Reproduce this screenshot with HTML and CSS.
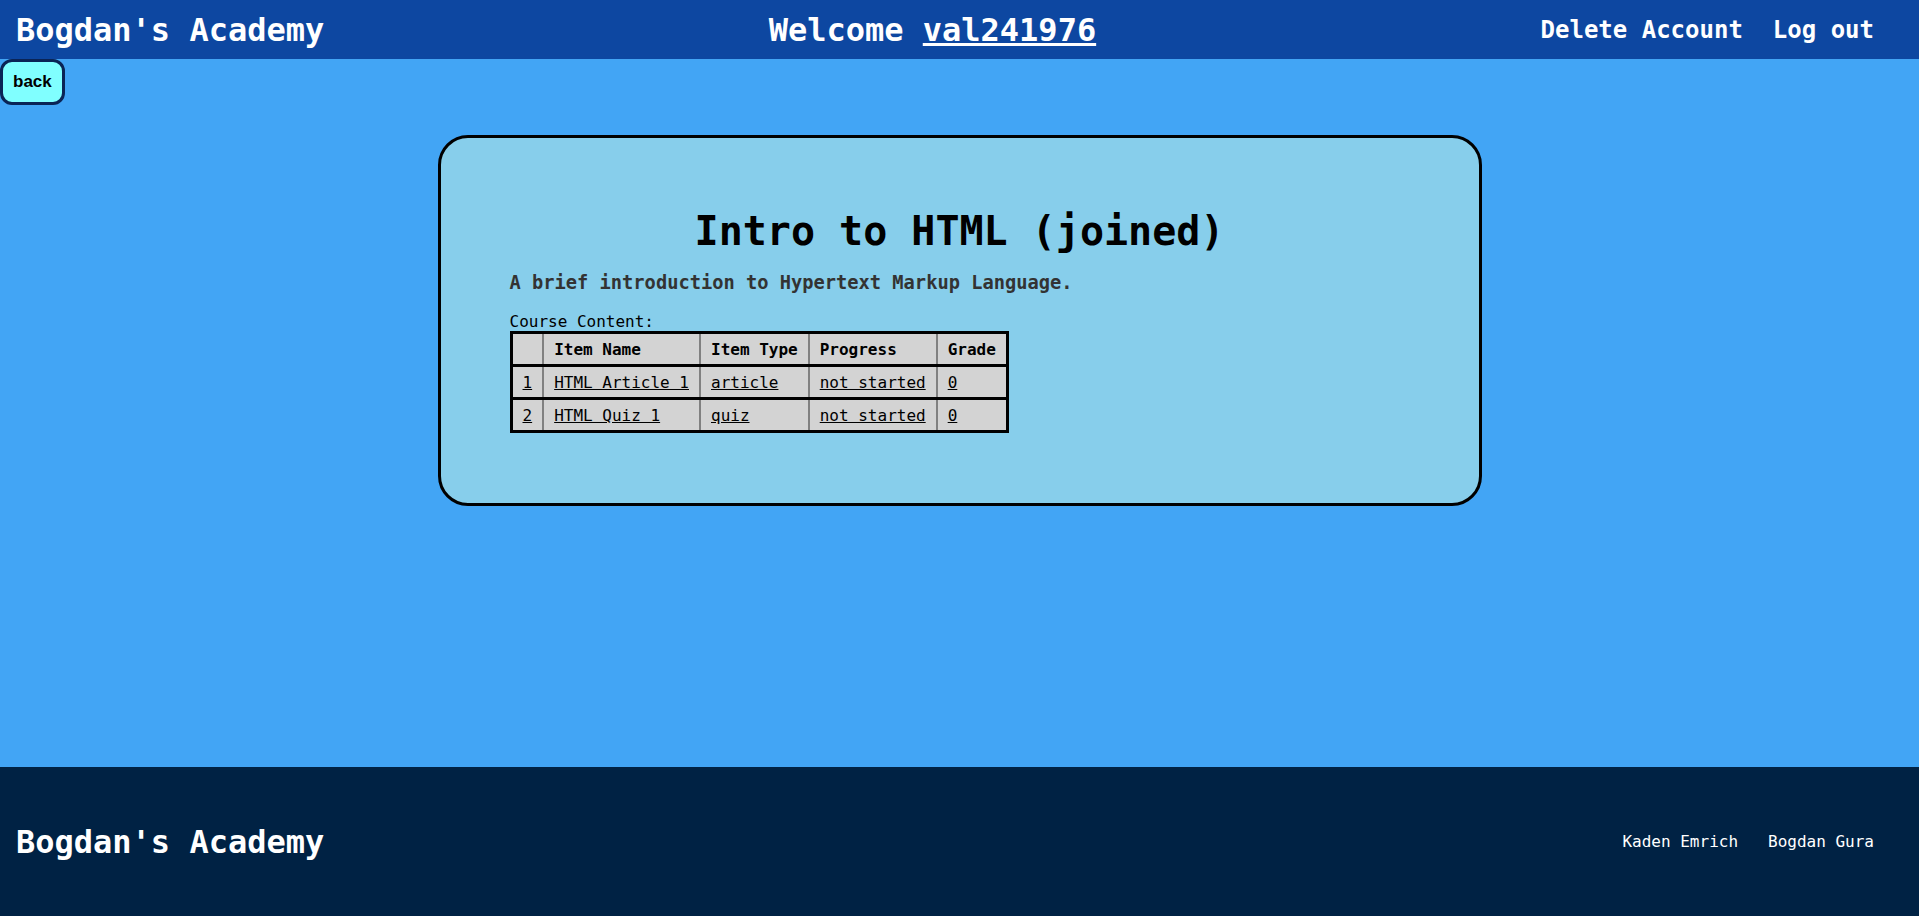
FILE: index.html
```html
<!DOCTYPE html>
<html lang="en">
<head>
<meta charset="utf-8">
<title>Intro to HTML - Bogdan's Academy</title>
<link rel="stylesheet" href="styles.css">
</head>
<body>
<header class="topbar">
  <div class="brand">Bogdan's Academy</div>
  <div class="welcome">Welcome <a href="#" class="user-link">val241976</a></div>
  <nav class="nav">
    <a href="#" class="nav-link">Delete Account</a>
    <a href="#" class="nav-link">Log out</a>
  </nav>
</header>
<main class="main">
  <div class="back-row"><button class="back-btn" type="button">back</button></div>
  <section class="card">
    <h1 class="course-title">Intro to HTML (joined)</h1>
    <h3 class="course-desc">A brief introduction to Hypertext Markup Language.</h3>
    <div class="content-label">Course Content:</div>
    <table class="content-table">
      <thead>
        <tr><th></th><th>Item Name</th><th>Item Type</th><th>Progress</th><th>Grade</th></tr>
      </thead>
      <tbody>
        <tr><td><a href="#">1</a></td><td><a href="#">HTML Article 1</a></td><td><a href="#">article</a></td><td><a href="#">not started</a></td><td><a href="#">0</a></td></tr>
        <tr><td><a href="#">2</a></td><td><a href="#">HTML Quiz 1</a></td><td><a href="#">quiz</a></td><td><a href="#">not started</a></td><td><a href="#">0</a></td></tr>
      </tbody>
    </table>
  </section>
</main>
<footer class="footer">
  <div class="brand">Bogdan's Academy</div>
  <div class="credits">
    <span class="credit">Kaden Emrich</span>
    <span class="credit">Bogdan Gura</span>
  </div>
</footer>
</body>
</html>
```
FILE: styles.css
```css
html, body {
  margin: 0;
  padding: 0;
}
body {
  font-family: "DejaVu Sans Mono", monospace;
  background: #42a5f5;
  min-height: 100vh;
  display: flex;
  flex-direction: column;
  color: #000;
}
.topbar {
  height: 59px;
  background: #0d47a1;
  color: #fff;
  display: flex;
  align-items: center;
  justify-content: space-between;
  padding: 0 45px 0 16px;
  box-sizing: border-box;
}
.brand {
  font-size: 32px;
  font-weight: bold;
  color: #fff;
}
.welcome {
  font-size: 32px;
  font-weight: bold;
}
.user-link {
  color: #fff;
  text-decoration: underline;
}
.nav {
  display: flex;
  gap: 30px;
}
.nav-link {
  color: #fff;
  text-decoration: none;
  font-size: 24px;
  font-weight: bold;
}
.main {
  flex: 1;
}
.back-row {
  display: flex;
}
.back-btn {
  font-family: "Liberation Sans", Arial, sans-serif;
  font-size: 17px;
  font-weight: bold;
  color: #000;
  background: #80ffff;
  border: 3px solid #0a2456;
  border-radius: 12px;
  padding: 10px 10px;
  line-height: 20px;
  margin: 0;
  cursor: pointer;
}
.card {
  width: 1044px;
  box-sizing: border-box;
  margin: 30px auto 0;
  background: #87ceeb;
  border: 3px solid #000;
  border-radius: 30px;
  padding: 70px 69px 70px;
}
.course-title {
  font-size: 40px;
  font-weight: bold;
  text-align: center;
  margin: 0 0 18px;
}
.course-desc {
  font-size: 18.72px;
  font-weight: bold;
  color: #333;
  margin: 0 0 18.7px;
}
.content-label {
  font-size: 16px;
}
.content-table {
  border-collapse: collapse;
  border: 3px solid #000;
  font-size: 16px;
}
.content-table th,
.content-table td {
  background: #d3d3d3;
  text-align: left;
  padding: 6px 10px 5px;
  border-left: 2px solid #808080;
  border-right: 2px solid #808080;
  border-top: 3px solid #000;
  border-bottom: 3px solid #000;
}
.content-table a {
  color: #000;
  text-decoration: underline;
}
.footer {
  height: 149px;
  background: #002244;
  color: #fff;
  display: flex;
  align-items: center;
  justify-content: space-between;
  padding: 0 45px 0 16px;
  box-sizing: border-box;
}
.credits {
  display: flex;
  gap: 30px;
  font-size: 16px;
}
.credit {
  color: #fff;
}
```
